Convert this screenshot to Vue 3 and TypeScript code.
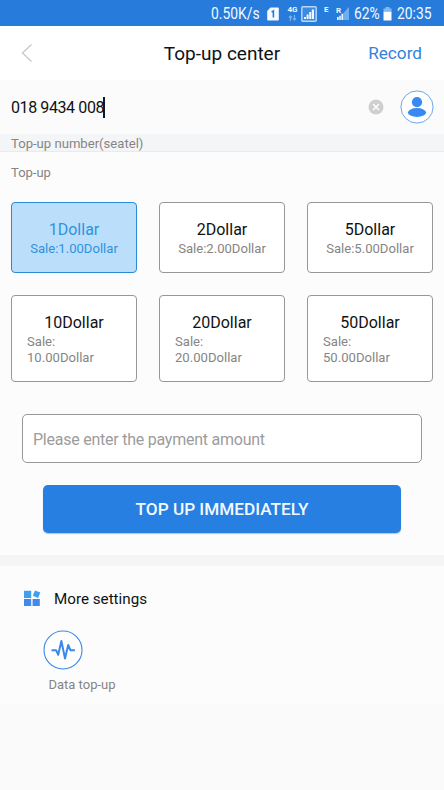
<script setup lang="ts">
import { ref } from 'vue'

interface Amount {
  value: string
}

const phone = ref('018 9434 008')
const custom = ref('')
const selected = ref(0)
const amounts: Amount[] = ['1', '2', '5', '10', '20', '50'].map((value) => ({ value }))
</script>

<template>
  <main class="screen">
    <div class="status">
      <span class="speed narrow">0.50K/s</span>
      <svg class="sim" width="12" height="14" viewBox="0 0 12 14">
        <path d="M3.5 .5H11a.8.8 0 0 1 .8.8v11.4a.8.8 0 0 1-.8.8H1a.8.8 0 0 1-.8-.8V4z" fill="#f4faff" />
        <path d="M4.6 5.2 6.4 4v6.5" fill="none" stroke="#2a7cdb" stroke-width="1.6" />
      </svg>
      <div class="network">
        <span class="gen">4G</span>
        <svg width="9" height="6" viewBox="0 0 9 6" fill="none" stroke="#78b4f4" stroke-width="1.2">
          <path d="M2.5 6V1M1 2.5 2.5 1 4 2.5M6.5 0v5M5 3.5 6.5 5 8 3.5" />
        </svg>
      </div>
      <svg class="signal" width="16" height="16" viewBox="0 0 16 16">
        <rect x=".8" y=".8" width="14.4" height="14.4" rx="1" fill="#3c8ae2" stroke="#b7d9fa" stroke-width="1.4" />
        <path d="M3 13v-2h2v2zm2.6 0V8.5h2V13zm2.6 0V6h2v7zm2.6 0V3.5h2.2V13z" fill="#eef8ff" />
      </svg>
      <span class="edge">E</span>
      <svg class="roam" width="14" height="15" viewBox="0 0 14 15">
        <path d="M13 1v13H7V7.5z" fill="#70aef0" />
        <path d="M1 14v-3h1.7v3zm2.2 0V9.8h1.6V14zm2.2 0V7.8H7V14z" fill="#e6f5ff" />
        <text x="0" y="6.5" class="roam-mark">R</text>
      </svg>
      <span class="percent narrow">62%</span>
      <svg class="battery" width="9" height="14" viewBox="0 0 9 14">
        <path d="M2.5 0h4v1.5h2V5H.5V1.5h2z" fill="#83b9f1" />
        <path d="M.5 4.8h8v8.7h-8z" fill="#fff" />
      </svg>
      <span class="clock narrow">20:35</span>
    </div>

    <header class="header">
      <svg class="back" width="12" height="20" viewBox="0 0 12 20">
        <path d="M10.5 1.5 1.5 10l9 8.5" fill="none" stroke="#c6c8ca" stroke-width="1.3" />
      </svg>
      <h1 class="title">Top-up center</h1>
      <a class="record">Record</a>
    </header>

    <section class="phone">
      <span class="number">{{ phone }}</span>
      <i class="caret"></i>
      <svg class="clear" width="16" height="16" viewBox="0 0 16 16">
        <circle cx="8" cy="8" r="7.5" fill="#cfcfcf" />
        <path d="m5 5 6 6m0-6-6 6" stroke="#fff" stroke-width="1.5" />
      </svg>
      <svg class="contact" width="34" height="34" viewBox="0 0 34 34">
        <circle cx="17" cy="17" r="16.1" fill="#fff" stroke="#6aa8e8" stroke-width="1" />
        <circle cx="17" cy="12.2" r="5.1" fill="#388af0" />
        <ellipse cx="17" cy="22.5" rx="9.1" ry="4.4" fill="#388af0" />
      </svg>
    </section>
    <div class="carrier">Top-up number(seatel)</div>

    <section class="topup">
      <h2 class="label">Top-up</h2>
      <div class="amounts">
        <button
          v-for="(item, index) in amounts"
          :key="item.value"
          class="amount"
          :class="{ selected: selected === index }"
          @click="selected = index"
        >
          <span class="name">{{ item.value }}Dollar</span>
          <span class="sale">Sale:<wbr />{{ item.value }}.00Dollar</span>
        </button>
      </div>
      <input v-model="custom" class="custom" placeholder="Please enter the payment amount" />
      <button class="submit">TOP UP IMMEDIATELY</button>
    </section>

    <section class="more">
      <div class="more-head">
        <svg width="18" height="17" viewBox="0 0 18 17">
          <path d="M1 .8h7.2v7.2H1z" fill="#3fa1ee" />
          <path d="m12 .4 5.3 2.2-2.2 5.3-5.3-2.2z" fill="#3fa1ee" />
          <path d="M1 9h7.2v7H1zm8.6 0h7.2v7H9.6z" fill="#4189eb" />
        </svg>
        <span class="more-title">More settings</span>
      </div>
      <div class="entry">
        <svg width="40" height="40" viewBox="0 0 40 40" fill="none" stroke="#3b88e6">
          <circle cx="20" cy="20" r="19" fill="#fff" stroke-width="1.1" />
          <path
            d="M8.5 20.2h4.6l2.1 4.6 3.2-13.8 3.6 17.5 3.2-13.5 2.2 5.2h4.5"
            stroke-width="2"
            stroke-linejoin="round"
          />
        </svg>
        <span class="entry-name">Data top-up</span>
      </div>
    </section>
  </main>
</template>

<style>
body {
  background: #fafafa;
}
</style>

<style scoped>
.screen {
  box-sizing: border-box;
  width: 444px;
  height: 790px;
  overflow: hidden;
  background: #fafafa;
  color: #101214;
  font-family: Roboto, "Liberation Sans", sans-serif;
}
.status {
  display: flex;
  align-items: center;
  height: 26px;
  padding: 1px 0 0 211px;
  box-sizing: border-box;
  background: #277bdb;
  color: #f1f9ff;
  font-size: 16px;
  line-height: 26px;
  white-space: nowrap;
}
.status > * {
  flex-shrink: 0;
}
.narrow {
  transform: scaleX(0.865);
  transform-origin: left center;
}
.speed {
  width: 49px;
}
.sim {
  margin-left: 7px;
}
.network {
  display: flex;
  flex-direction: column;
  align-items: center;
  width: 11px;
  margin-left: 8px;
  gap: 1px;
}
.gen {
  font-size: 8px;
  font-weight: 700;
  line-height: 8px;
}
.signal {
  margin-left: 3px;
}
.edge {
  margin: -7px 0 0 7px;
  width: 5px;
  font-size: 8px;
  font-weight: 700;
  line-height: 8px;
}
.roam {
  margin-left: 7px;
}
.roam-mark {
  fill: #eef8ff;
  font-size: 8px;
  font-weight: 700;
}
.percent {
  width: 26px;
  margin-left: 4px;
}
.battery {
  margin-left: 3px;
}
.clock {
  margin-left: 5px;
}
.header {
  display: grid;
  grid-template-columns: 100px 1fr 100px;
  align-items: center;
  height: 54px;
  background: #fff;
}
.back {
  margin-left: 21px;
}
.title {
  margin: 2px 0 0;
  text-align: center;
  font-size: 19px;
  font-weight: 400;
  line-height: 24px;
}
.record {
  padding: 0 22px 0 0;
  text-align: right;
  color: #3482dc;
  font-size: 17.2px;
  line-height: 24px;
}
.phone {
  display: flex;
  align-items: center;
  height: 54px;
  padding: 0 10px 0 11px;
  box-sizing: border-box;
  background: #fbfbfc;
}
.number {
  font-size: 16px;
  letter-spacing: -0.4px;
}
.caret {
  width: 2px;
  height: 21px;
  margin-left: -1px;
  background: #101828;
}
.clear {
  margin-left: auto;
}
.contact {
  margin-left: 16px;
}
.carrier {
  height: 18px;
  padding-left: 11px;
  box-sizing: border-box;
  border-bottom: 1px solid #e9eaeb;
  background: #f4f5f6;
  color: #858585;
  font-size: 13.1px;
  line-height: 19px;
}
.topup {
  display: flex;
  flex-direction: column;
  height: 403px;
  box-sizing: border-box;
  padding: 12px 11px 0;
  background: #fcfcfc;
}
.label {
  margin: 0;
  color: #858585;
  font-size: 13px;
  font-weight: 400;
  line-height: 17px;
}
.amounts {
  display: grid;
  grid-template-columns: repeat(3, 126px);
  grid-template-rows: 71px 87px;
  justify-content: space-between;
  row-gap: 22px;
  margin-top: 21px;
}
.amount {
  display: flex;
  flex-direction: column;
  align-items: center;
  padding: 17px 15px 0;
  border: 1px solid #979797;
  border-radius: 4px;
  background: #fff;
  font-family: inherit;
}
.name {
  color: #101214;
  font-size: 16px;
  line-height: 20px;
}
.sale {
  color: #858585;
  font-size: 13.1px;
  line-height: 16px;
  text-align: left;
  margin-top: 1px;
}
.selected {
  border-color: #268bd8;
  background: #bbdefa;
}
.selected .name,
.selected .sale {
  color: #2e94df;
}
.custom {
  height: 49px;
  margin: 32px 11px 0;
  padding: 1px 10px 0;
  box-sizing: border-box;
  border: 1px solid #979797;
  border-radius: 5px;
  background: #fff;
  font: 16px Roboto, sans-serif;
  letter-spacing: -0.24px;
}
.custom::placeholder {
  color: #9c9c9c;
}
.submit {
  height: 48px;
  margin: 22px 32px 0;
  border: 0;
  border-radius: 5px;
  background: #277fe1;
  box-shadow: 0 1px 1px #a9c7ea;
  color: #f3faff;
  font: 500 17.2px Roboto, sans-serif;
}
.more {
  height: 149px;
  box-sizing: border-box;
  border-top: 11px solid #f4f5f6;
  background: #fcfcfc;
}
.more-head {
  display: flex;
  align-items: center;
  height: 20px;
  padding: 22px 0 0 23px;
}
.more-title {
  margin: 2px 0 0 13px;
  font-size: 15.2px;
}
.entry {
  display: flex;
  flex-direction: column;
  align-items: center;
  width: 80px;
  margin: 22px 0 0 42px;
}
.entry svg {
  align-self: flex-start;
  margin-left: 1px;
}
.entry-name {
  margin-top: 7px;
  color: #858585;
  font-size: 13px;
  line-height: 16px;
}
</style>
